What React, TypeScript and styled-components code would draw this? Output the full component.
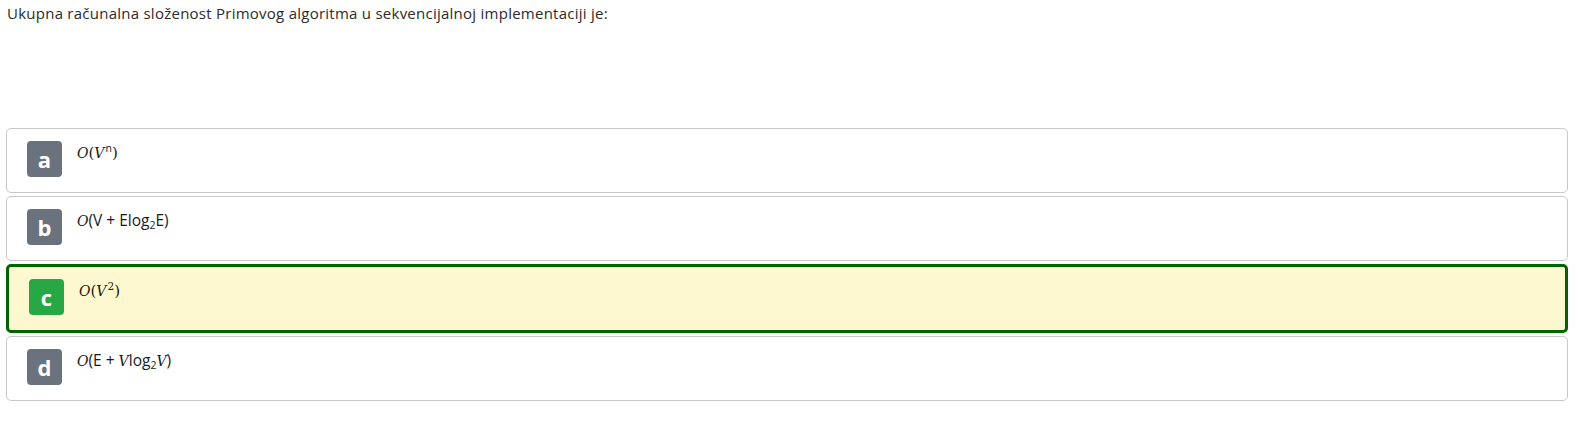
import React from "react";
import styled, { createGlobalStyle } from "styled-components";

const Global = createGlobalStyle`
  html, body { margin: 0; padding: 0; background: #ffffff; }
  body { font-family: "Open Sans", "Noto Sans", sans-serif; color: #212529; }
`;

const Page = styled.div`
  padding: 3px 10px 0 6px;
  display: flex;
  flex-direction: column;
`;

const Question = styled.div`
  font-size: 15px;
  line-height: 20px;
  padding-left: 1px;
  color: #2b2b2b;
  letter-spacing: 0.25px;
  height: 125px;
`;

const Answers = styled.div`
  display: flex;
  flex-direction: column;
  gap: 3px;
`;

const Card = styled.div<{ $selected?: boolean }>`
  display: flex;
  align-items: flex-start;
  gap: 15px;
  padding: 12px 20px;
  box-sizing: content-box;
  height: 39px;
  border: ${(p) => (p.$selected ? "3px solid #006400" : "1px solid #c8c8c8")};
  border-radius: 5px;
  background: ${(p) => (p.$selected ? "#fdf8cf" : "#ffffff")};
`;

const Badge = styled.div<{ $selected?: boolean }>`
  width: 35px;
  height: 36px;
  flex: 0 0 35px;
  border-radius: 4px;
  background: ${(p) => (p.$selected ? "#28a745" : "#6a737d")};
  color: #ffffff;
  font-family: "Open Sans", "Noto Sans", sans-serif;
  font-weight: 700;
  font-size: 22px;
  display: flex;
  align-items: center;
  justify-content: center;
  padding-bottom: 1px;
  box-sizing: border-box;
`;

const Formula = styled.div`
  font-size: 15px;
  line-height: 20px;
  padding-top: 1px;
  color: #1a1a1a;
  white-space: nowrap;
`;

const MI = styled.span`
  font-family: "DejaVu Serif", "Liberation Serif", serif;
  font-style: italic;
  font-size: 14px;
`;

const MO = styled.span`
  font-family: "DejaVu Serif", "Liberation Serif", serif;
  font-size: 15px;
`;

const Txt = styled.span`
  font-family: "Open Sans", "Noto Sans", sans-serif;
  font-size: 15.5px;
`;

const Sup = styled.sup`
  font-family: "Open Sans", "Noto Sans", sans-serif;
  font-size: 10.5px;
  vertical-align: 6px;
  line-height: 0;
  margin-left: 1px;
`;

const SupSerif = styled(Sup)`
  font-family: "DejaVu Serif", "Liberation Serif", serif;
`;

const Sub = styled.sub`
  font-family: "Open Sans", "Noto Sans", sans-serif;
  font-size: 10.5px;
  vertical-align: -3px;
  line-height: 0;
`;

export default function App() {
  return (
    <>
      <Global />
      <Page>
        <Question>
          Ukupna računalna složenost Primovog algoritma u sekvencijalnoj implementaciji je:
        </Question>
        <Answers>
          <Card>
            <Badge>a</Badge>
            <Formula>
              <MI>O</MI>
              <MO>(</MO>
              <MI>V</MI>
              <Sup>n</Sup>
              <MO>)</MO>
            </Formula>
          </Card>
          <Card>
            <Badge>b</Badge>
            <Formula>
              <MI>O</MI>
              <Txt>(V + Elog</Txt>
              <Sub>2</Sub>
              <Txt>E)</Txt>
            </Formula>
          </Card>
          <Card $selected>
            <Badge $selected>c</Badge>
            <Formula>
              <MI>O</MI>
              <MO>(</MO>
              <MI>V</MI>
              <SupSerif>2</SupSerif>
              <MO>)</MO>
            </Formula>
          </Card>
          <Card>
            <Badge>d</Badge>
            <Formula>
              <MI>O</MI>
              <Txt>(E + </Txt>
              <MI>V</MI>
              <Txt>log</Txt>
              <Sub>2</Sub>
              <MI>V</MI>
              <Txt>)</Txt>
            </Formula>
          </Card>
        </Answers>
      </Page>
    </>
  );
}
